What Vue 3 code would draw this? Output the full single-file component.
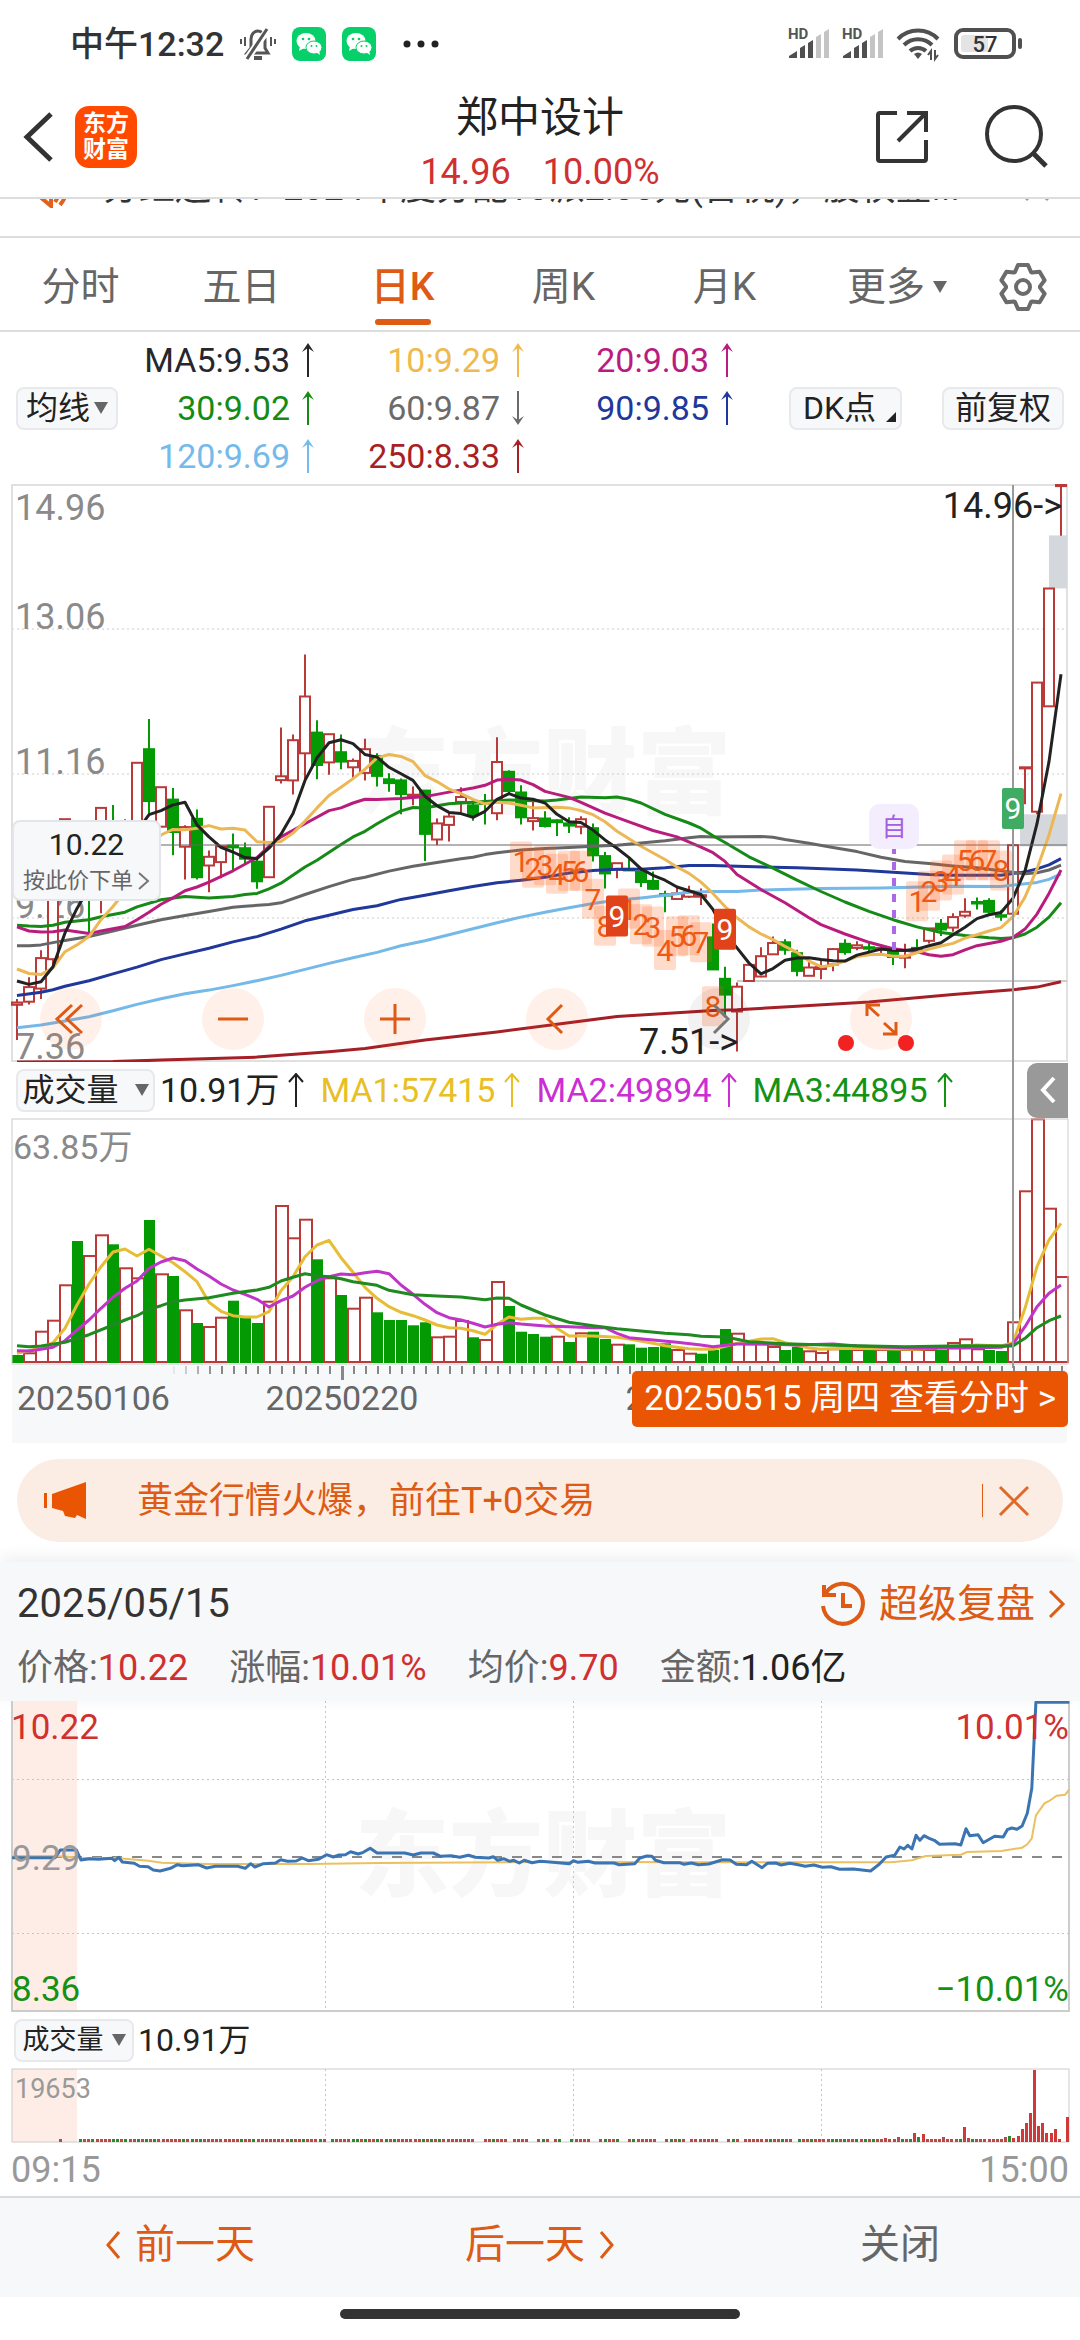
<script setup>
const tabs = ['分时', '五日', '日K', '周K', '月K']
const averages = [
  { text: 'MA5:9.53', up: true, color: '#26272b' },
  { text: '10:9.29', up: true, color: '#efb94e' },
  { text: '20:9.03', up: true, color: '#bb1a80' },
  { text: '30:9.02', up: true, color: '#148c14' },
  { text: '60:9.87', up: false, color: '#6b6b6b' },
  { text: '90:9.85', up: true, color: '#20389c' },
  { text: '120:9.69', up: true, color: '#74baea' },
  { text: '250:8.33', up: true, color: '#a81f24' },
]
const volumeAverages = [
  { text: '10.91万', color: '#222' },
  { text: 'MA1:57415', color: '#e9bf26' },
  { text: 'MA2:49894', color: '#cb2fd3' },
  { text: 'MA3:44895', color: '#149214' },
]
const stats = [
  { label: '价格:', value: '10.22', red: true },
  { label: '涨幅:', value: '10.01%', red: true },
  { label: '均价:', value: '9.70', red: true },
  { label: '金额:', value: '1.06亿', red: false },
]

const RED = '#b93a38'
const GREEN = '#049a04'

// One trading day every 12 units
const dayX = (i) => 17 + i * 12
const priceY = (v) => Math.round(((v - 10) / 2.657) * 10) / 10 + 1
const pairs = (text) => text.split(',').map((p) => p.trim().split(' ').map(Number))
const linePoints = (text, fy) => pairs(text).map(([i, v]) => `${dayX(i)},${fy(v)}`).join(' ')

// colour, high, body top, body bottom, low
const candles = `r 1376 1385 1391 1485|r 1318 1344 1383 1390|r 1246 1267 1348 1376|r 1080 1080 1270 1296|r 898 898 1010 1010
g 1000 1010 1050 1080|g 940 960 1090 1200|r 868 868 1080 1148|g 860 910 980 1000|r 898 920 1000 1040|r 748 748 960 960
g 632 712 850 890|r 813 813 918 918|g 815 846 932 994|r 914 919 971 1058|g 872 897 1052 1058|r 981 998 1021 1092
r 970 970 1012 1055|g 936 968 973 1036|g 960 975 1003 1020|g 1003 1011 1063 1083|r 865 865 1052 1052|r 654 784 794 803
r 673 688 795 832|r 460 572 723 795|g 635 668 754 792|r 672 672 747 780|g 673 720 745 765|r 737 743 760 788
r 684 712 775 795|g 723 730 783 811|g 776 792 802 825|g 790 795 831 885|r 811 833 838 861|g 820 822 937 1009
r 896 909 952 967|r 880 891 913 957|r 813 839 852 880|g 848 861 886 902|g 831 853 857 912|r 680 746 882 901
g 768 772 823 832|g 808 827 893 912|r 851 895 903 928|g 877 896 916 920|g 898 901 906 943|g 893 909 915 935
r 890 898 918 938|g 909 922 994 1010|g 985 996 1042 1082|r 1015 1015 1032 1055|g 998 1030 1034 1036|g 1033 1038 1065 1078
g 1037 1062 1083 1086|g 1088 1097 1101 1145|r 1078 1095 1110 1110|r 1075 1090 1104 1107|r 1082 1100 1104 1126
g 1175 1212 1297 1297|g 1290 1322 1364 1425|r 1332 1343 1409 1515|r 1283 1285 1328 1328|r 1238 1262 1316 1318
r 1210 1227 1257 1257|g 1217 1225 1245 1258|g 1245 1254 1301 1315|r 1275 1292 1314 1314|r 1270 1291 1296 1323
r 1240 1243 1284 1302|g 1217 1229 1251 1258|r 1222 1233 1240 1246|g 1224 1238 1242 1252|r 1233 1240 1244 1260
g 1243 1245 1264 1285|r 1229 1262 1266 1294|g 1217 1240 1244 1250|r 1188 1188 1221 1228|g 1163 1176 1191 1208
r 1148 1158 1186 1197|r 1108 1144 1154 1160|g 1106 1118 1122 1138|g 1108 1115 1144 1149|g 1140 1153 1157 1168
r 967 967 1149 1175|r 760 760 763 858|r 535 535 878 885|r 285 285 598 598|r 10 10 13 145`
  .split(/[|\n]/)
  .map((row, i) => {
    const [c, high, top, bottom, low] = row.trim().split(' ')
    return {
      x: dayX(i),
      color: c === 'r' ? RED : GREEN,
      fill: c === 'r' ? '#fff' : GREEN,
      high: priceY(+high),
      top: priceY(+top),
      bottom: priceY(+bottom),
      low: priceY(+low),
    }
  })

const priceLines = [
  { color: '#a51f26', data: '0 1543,8 1542,12 1538,20 1530,26 1516,29 1507,34 1485,40 1463,45 1443,50 1422,54 1414,58 1406,60 1404,65 1395,71 1384,78 1364,83 1351,85 1344,87 1330' },
  { color: '#74b9e8', data: '0 1452,2 1445,4 1434,6 1423,8 1407,10 1390,12 1375,14 1362,16 1352,18 1340,20 1327,22 1313,24 1297,26 1281,28 1266,30 1252,32 1234,34 1221,36 1205,38 1189,40 1173,42 1158,44 1145,46 1133,48 1122,50 1113,52 1107,54 1100,56 1092,58 1090,60 1090,62 1086,67 1082,72 1081,78 1076,82 1077,83 1073,85 1066,86 1058,87 1043' },
  { color: '#1f3899', data: '0 1366,2 1358,3 1351,4 1342,6 1327,8 1309,10 1291,12 1271,14 1256,16 1241,18 1224,20 1210,22 1190,24 1168,26 1153,28 1138,30 1128,32 1111,34 1100,36 1088,38 1077,40 1067,42 1060,44 1052,46 1041,48 1034,50 1031,52 1031,54 1027,56 1021,58 1021,60 1023,65 1027,70 1033,73 1039,76 1045,78 1047,82 1047,83 1042,84 1038,85 1030,86 1019,87 1003' },
  { color: '#666', data: '0 1234,1 1234,2 1232,4 1220,6 1210,8 1195,10 1180,12 1165,14 1154,16 1143,18 1132,19 1129,21 1125,22 1120,24 1098,26 1077,28 1058,29 1052,31 1036,33 1023,35 1013,37 1003,38 999,39 992,40 987,42 980,44 976,46 973,48 970,50 967,52 961,54 955,56 947,57 944,58 945,62 944,63 946,64 952,66 962,68 973,70 984,72 999,74 1010,76 1016,78 1022,80 1027,82 1035,84 1043,85 1040,86 1033,87 1020' },
  { color: '#168a16', data: '0 1180,1 1182,2 1183,3 1180,4 1172,6 1165,7 1157,9 1145,10 1131,12 1112,14 1103,16 1107,18 1103,19 1098,20 1095,21 1083,22 1068,24 1025,25 1007,27 965,28 945,29 930,30 910,31 892,32 876,33 867,34 868,35 862,36 857,38 853,40 849,41 847,44 850,45 847,47 839,49 841,50 839,51 845,52 855,54 885,56 908,57 922,58 942,59 960,61 998,63 1028,65 1060,67 1090,69 1118,71 1143,73 1165,75 1184,77 1199,79 1207,81 1213,82 1215,83 1213,84 1203,85 1185,86 1158,87 1120' },
  { color: '#b81d7d', data: '0 1184,1 1195,2 1198,3 1197,4 1192,5 1197,6 1202,7 1195,9 1183,10 1165,11 1145,12 1124,13 1107,14 1088,15 1078,16 1065,18 1035,20 1000,21 970,22 945,24 910,26 875,27 868,28 855,29 845,30 846,32 843,34 838,36 826,38 815,39 808,40 794,41 792,42 794,43 806,44 824,46 840,47 853,49 882,51 905,53 928,55 945,57 972,58 987,59 1010,60 1045,62 1085,64 1120,66 1160,67 1178,69 1203,71 1225,73 1242,75 1250,76 1258,77 1262,78 1258,79 1245,80 1234,82 1222,83 1212,84 1190,85 1150,86 1095,87 1033' },
  { color: '#ecb755', data: '0 1296,1 1308,2 1311,3 1293,4 1250,5 1232,6 1210,7 1165,8 1130,9 1090,11 985,12 940,13 925,14 926,15 922,16 915,17 924,18 922,19 927,20 958,21 960,22 957,23 935,24 903,25 868,26 835,27 813,28 790,29 765,30 735,31 726,32 731,33 745,34 782,35 798,36 818,37 830,38 845,39 857,40 853,41 855,42 861,43 868,45 866,46 868,47 875,48 886,49 905,50 930,51 950,52 970,54 1005,55 1025,56 1042,57 1065,58 1095,59 1130,60 1160,61 1184,62 1203,63 1218,64 1236,65 1252,66 1275,67 1290,68 1286,69 1275,70 1263,71 1258,72 1257,73 1262,74 1262,75 1253,76 1243,77 1235,78 1228,79 1214,80 1205,81 1195,82 1186,83 1157,84 1105,85 1030,86 940,87 830' },
  { color: '#222', data: '0 1328,1 1337,2 1330,3 1290,4 1200,5 1135,6 1080,8 990,10 930,11 886,12 875,13 860,14 853,15 913,16 945,17 973,18 985,19 1000,20 1003,21 975,22 938,23 883,24 795,25 735,26 695,27 687,28 697,29 726,30 733,31 760,32 777,33 795,34 837,35 862,36 880,37 883,38 893,39 877,40 845,41 830,42 842,43 845,44 855,45 885,46 905,47 907,48 927,49 953,50 975,51 1000,52 1030,53 1047,54 1060,55 1078,56 1088,57 1098,58 1138,59 1200,60 1240,61 1280,62 1309,63 1295,64 1273,65 1267,66 1266,67 1271,68 1274,69 1275,70 1259,71 1251,72 1243,73 1246,74 1247,75 1243,76 1234,77 1226,78 1205,79 1185,80 1162,81 1152,82 1146,83 1108,84 1035,85 910,86 745,87 513' },
].map((l) => ({ color: l.color, points: linePoints(l.data, priceY) }))

// Nine-turn sequence marks: day index, digit, top edge
const marks = pairs(
  '42 1 957,43 2 974,44 3 967,45 4 990,46 5 982,47 6 982,48 7 1056,49 8 1128,51 1 1082,52 2 1124,53 3 1130,54 4 1192,55 5 1156,56 6 1153,57 7 1172,58 8 1342,75 1 1063,76 2 1035,77 3 1008,78 4 992,79 5 954,80 6 954,81 7 954,82 8 981',
).map(([i, n, v]) => ({ x: dayX(i), n, y: priceY(v) }))
const nines = [
  { x: dayX(50), y: priceY(1101), color: '#e0431a' },
  { x: dayX(59), y: priceY(1136), color: '#e0431a' },
  { x: dayX(83), y: priceY(815), color: '#40ab63' },
]
const priceLabels = [
  { text: '14.96', v: 103 },
  { text: '13.06', v: 393 },
  { text: '11.16', v: 779 },
  { text: '9.26', v: 1160 },
  { text: '7.36', v: 1535 },
]

// Daily volume
const volY = (v) => Math.round((v / 3 - 58) * 10) / 10
const volumes = 'g885 r880 r815 r782 r676 g543 r588 r526 g553 r625 r655 g480 r643 g648 r751 g789 r801 r773 g722 g773 g789 r725 r438 r535 r479 g598 r655 g705 r746 r713 g757 g780 g780 g796 g787 r832 r830 r783 g832 r840 r666 g738 g815 g822 g830 r830 g846 r820 g815 g837 r854 g853 g863 g861 g850 r870 r881 g881 g870 g807 r821 r853 r853 r861 g870 g860 r874 r879 r868 g868 r870 g870 r870 g870 r870 r870 r870 g870 r849 r838 r868 g870 g873 r787 r394 r178 r446 r651'
  .split(' ')
  .map((t, i) => ({ x: dayX(i), red: t[0] === 'r', y: volY(+t.slice(1)) }))
const volumeLines = [
  { color: '#e6bd35', data: '0 880,1 872,2 863,3 848,4 805,5 735,6 672,7 620,8 576,9 567,10 588,11 568,12 588,13 608,14 635,15 665,16 727,17 754,18 767,19 771,20 771,21 755,22 692,23 650,24 590,25 555,26 541,27 593,28 637,29 682,30 715,31 740,32 757,33 767,34 780,35 795,36 803,37 805,38 812,39 823,40 793,41 771,42 778,43 775,44 775,45 805,46 828,48 828,50 832,51 837,53 850,54 857,56 866,57 868,58 868,60 850,61 844,62 837,63 836,64 848,66 864,67 868,69 865,75 868,78 860,80 855,82 858,83 848,84 745,85 620,86 540,87 490' },
  { color: '#bf35c8', data: '0 872,1 873,2 868,3 862,4 842,5 810,6 780,7 745,8 712,9 685,10 663,11 625,12 606,13 594,14 602,15 627,16 648,17 672,18 690,19 703,20 718,21 741,22 722,23 708,24 682,25 662,26 650,27 642,28 644,29 638,30 634,31 641,32 675,33 703,34 733,35 758,36 773,37 780,38 790,39 801,40 793,41 788,42 792,43 795,44 798,46 800,48 803,49 803,50 820,51 833,53 840,55 847,57 855,58 860,60 852,62 852,65 855,68 852,70 858,75 865,79 864,82 862,83 852,84 800,85 740,86 700,87 675' },
  { color: '#1f8a1f', data: '0 857,1 860,2 858,4 847,6 824,8 795,9 780,10 767,11 748,12 737,13 725,14 720,16 713,18 700,20 690,21 682,22 663,23 652,24 641,25 647,26 650,27 656,28 665,30 676,31 691,33 704,35 708,37 711,39 719,40 714,41 715,42 735,43 750,44 765,46 787,48 797,50 806,52 813,54 820,56 824,57 829,59 831,60 838,61 845,64 851,68 856,74 860,79 857,83 858,84 835,85 803,86 782,87 768' },
].map((l) => ({ color: l.color, points: linePoints(l.data, volY) }))
const ticks = Array.from({ length: 75 }, (_, k) => ({
  x: 174 + k * 12,
  major: k === 14 || k === 44,
  opacity: Math.min(1, 0.15 + k * 0.25),
}))

// Intraday curve: session position and level
const minutePoints = (text) =>
  pairs(text).map(([x, v]) => `${Math.round((x / 2.9037) * 10) / 10},${Math.round(((v - 33) / 3) * 10) / 10}`).join(' ')
const avgCurve = minutePoints('35 498,160 498,235 503,345 505,430 512,470 518,600 522,900 522,1100 519,1568 516,2468 517,2588 517,2648 511,2688 498,2790 494,2808 486,2908 483,2968 473,2983 463,2996 445,3008 376,3033 340,3048 332,3068 317,3093 314,3105 298')
const priceCurve = minutePoints('35 503,160 503,175 480,222 480,235 510,260 506,285 508,325 505,333 512,345 502,355 516,390 520,405 529,430 530,445 540,465 543,495 535,515 524,530 527,575 524,600 534,625 529,690 529,712 535,728 521,740 531,765 521,800 519,815 509,835 514,860 513,878 504,895 512,925 508,948 494,968 501,985 495,1003 494,1018 485,1040 492,1055 487,1075 475,1095 489,1175 489,1200 495,1222 489,1258 489,1280 499,1310 497,1335 502,1360 496,1380 502,1420 504,1432 500,1445 511,1462 506,1480 514,1492 511,1508 519,1522 511,1545 518,1568 514,1588 515,1653 521,1665 512,1678 517,1708 514,1728 519,1783 519,1798 524,1843 521,1858 504,1878 498,1893 499,1903 511,1928 518,1973 518,1986 523,2008 519,2028 524,2058 522,2098 509,2120 510,2138 523,2168 524,2183 514,2213 533,2228 520,2253 519,2268 525,2293 520,2318 524,2338 529,2363 525,2388 532,2413 530,2438 538,2478 537,2528 543,2553 523,2573 501,2598 496,2613 471,2625 477,2636 466,2648 477,2660 436,2671 451,2683 437,2698 445,2713 451,2728 463,2773 461,2790 465,2805 416,2816 437,2840 434,2855 458,2888 439,2913 441,2925 419,2938 414,2953 418,2968 408,2983 370,2996 295,3008 37,3105 37')

const spikes = { 195: 4, 198: 5, 202: 9, 203: 5, 204: 8, 209: 5, 214: 15, 215: 4, 224: 5, 225: 6, 226: 4, 227: 6, 228: 13, 229: 19, 230: 29, 231: 72, 232: 16, 233: 19, 234: 9, 235: 9, 236: 13, 237: 3, 239: 25 }
const gaps = [60, 96, 97, 104, 109, 110, 114, 117, 118, 124, 125, 131, 132, 140, 141, 147, 155, 156, 160, 173, 238]
const palette = 'grrgrrrrggrgrrgrgrgrrrrrrgrgrgrrrrrrrrrgrrgrrrrrrrrgrrgrrr'
const minuteBars = Array.from({ length: 240 }, (_, k) => {
  const late = k > 225 || spikes[k] > 6
  const green = !late && palette[k % palette.length] === 'g'
  return { k, x: Math.round(79 + k * 4.13), h: spikes[k] || 3, color: green ? '#2c8a2c' : late ? '#cf3a38' : '#b94a48' }
}).filter((b) => !gaps.includes(b.k))

const gear = (() => {
  const tooth = [[-8, -15], [-5, -22], [5, -22], [8, -15]]
  const pts = []
  for (let k = 0; k < 6; k++) {
    const a = (k * Math.PI) / 3
    for (const [x, y] of tooth) {
      pts.push(`${(24 + x * Math.cos(a) - y * Math.sin(a)).toFixed(1)},${(24 + x * Math.sin(a) + y * Math.cos(a)).toFixed(1)}`)
    }
  }
  return pts.join(' ')
})()
</script>

<template>
  <div class="page">
    <div class="status">
      <span class="clock">中午12:32</span>
      <svg width="36" height="36" viewBox="0 0 36 36" fill="none" stroke="#555" stroke-width="3">
        <path d="M7 27h21l-3-5V13a7 8 0 0 0-14 0v9z" />
        <path d="M14 32h8" stroke-width="4" />
        <path d="M29 2L6 34" stroke="#fff" stroke-width="7" />
        <path d="M27 3L7 33" />
        <path d="M5 11v9M31 11v9M1 13v5M35 13v5" stroke-width="2" />
      </svg>
      <svg v-for="n in 2" :key="n" class="chat" width="34" height="34" viewBox="0 0 34 34">
        <rect width="34" height="34" rx="8" fill="#07d06a" />
        <ellipse cx="14" cy="14" rx="9.500" ry="8" fill="#fff" />
        <path d="M8 19l-1 5 5-3z" fill="#fff" />
        <ellipse cx="22" cy="20.500" rx="8" ry="6.500" fill="#fff" stroke="#07d06a" />
        <path d="M24 25l4 3-1-5z" fill="#fff" />
        <g fill="#07d06a"><circle cx="11" cy="12" r="1.300" /><circle cx="17" cy="12" r="1.300" /><circle cx="19.500" cy="19" r="1" /><circle cx="24.500" cy="19" r="1" /></g>
      </svg>
      <svg class="dots" width="36" height="8" viewBox="0 0 36 8" fill="#222"><circle cx="4" cy="4" r="3.500" /><circle cx="18" cy="4" r="3.500" /><circle cx="32" cy="4" r="3.500" /></svg>
      <span class="grow"></span>
      <svg v-for="n in 2" :key="'s' + n" class="signal" width="42" height="34" viewBox="0 0 42 34">
        <text x="0" y="12" font-size="15" font-weight="700" fill="#555">HD</text>
        <path d="M1 31v-2l8-5v7zM12 31V21l5-3v13zM20 31V16l5-3v18z" fill="#505050" />
        <path d="M28 31V10l5-3v24zM36 31V5l5-3v29z" fill="#c4c4c4" />
      </svg>
      <svg class="wifi" width="44" height="36" viewBox="0 0 44 36" fill="none" stroke="#505050" stroke-width="4">
        <path d="M2 13a28 28 0 0 1 40 0" /><path d="M8 19a20 20 0 0 1 28 0" /><path d="M14 25a12 12 0 0 1 16 0" />
        <path d="M18 28q4-3 8 0l-4 5z" fill="#505050" stroke="none" />
        <path d="M35 34v-9l-3 4M39 24v9l3-4" stroke-width="2" />
      </svg>
      <svg width="70" height="32" viewBox="0 0 70 32">
        <rect x="2" y="2" width="58" height="27" rx="7" fill="#fff" stroke="#505050" stroke-width="4" />
        <rect x="7" y="7" width="27" height="17" rx="3" fill="#e4e4e4" />
        <rect x="64" y="10" width="4" height="11" rx="2" fill="#505050" />
        <text x="31" y="24" text-anchor="middle" font-size="22" font-weight="500" fill="#333">57</text>
      </svg>
    </div>

    <header class="header">
      <div class="side">
        <button class="icon" aria-label="返回">
          <svg width="32" height="52" viewBox="0 0 32 52" fill="none" stroke="#333" stroke-width="5"><path d="M28 3L4 26l24 23" /></svg>
        </button>
        <a href="#" class="logo"><span>东方</span><span>财富</span></a>
      </div>
      <div class="title">
        <h1>郑中设计</h1>
        <p><span>14.96</span><span>10.00%</span></p>
      </div>
      <div class="side right">
        <button class="icon" aria-label="分享">
          <svg width="54" height="54" viewBox="0 0 54 54" fill="none" stroke="#333" stroke-width="4">
            <path d="M22 3H5q-2 0-2 2v44q0 2 2 2h44q2 0 2-2V30" /><path d="M32 3h19v19M50 4L23 31" />
          </svg>
        </button>
        <button class="icon" aria-label="搜索">
          <svg width="64" height="64" viewBox="0 0 64 64" fill="none" stroke="#333" stroke-width="4"><circle cx="29" cy="29" r="27" /><path d="M48 48l13 13" stroke-width="5" /></svg>
        </button>
      </div>
    </header>

    <div class="notice">
      <svg width="44" height="36" viewBox="0 0 44 36" fill="none" stroke="#e0621c" stroke-width="4"><path d="M2 24V12h8L24 2v32L12 24zM30 10q6 8-2 20M37 4q8 14-4 29" /></svg>
      <span>分红送转：2024年度分配10派2.00元(含税)，股权登...</span>
      <svg class="dismiss" width="26" height="26" viewBox="0 0 26 26" fill="none" stroke="#999" stroke-width="3"><path d="M2 2l22 22M24 2L2 24" /></svg>
    </div>

    <nav class="tabs">
      <a v-for="t in tabs" :key="t" href="#" :class="{ active: t === '日K' }">{{ t }}</a>
      <a href="#" class="more">更多<i class="caret"></i></a>
      <button class="icon gear" aria-label="设置">
        <svg width="48" height="48" viewBox="0 0 48 48" fill="none" stroke="#6b6b6b" stroke-width="4" stroke-linejoin="round"><polygon :points="gear" /><circle cx="24" cy="24" r="7" /></svg>
      </button>
    </nav>

    <section class="legend">
      <button class="chip">均线<i class="caret"></i></button>
      <div class="averages">
        <span v-for="a in averages" :key="a.text" :style="{ color: a.color }">{{ a.text }}
          <svg width="12" height="34" viewBox="0 0 12 34" :class="{ down: !a.up }"><path d="M6 2v32" stroke="currentColor" stroke-width="2" /><path d="M6 0l6 9-6-4-6 4z" fill="currentColor" /></svg>
        </span>
      </div>
      <button class="chip dk">DK点<i class="corner"></i></button>
      <button class="chip adjust">前复权</button>
    </section>

    <section class="chart">
      <svg class="plot" viewBox="0 0 1080 578">
        <text class="watermark" x="355" y="323">东方财富</text>
        <g stroke="#ccc" stroke-dasharray="2 3"><path d="M12 145H1067M12 290H1067M12 434H1067" /></g>
        <rect x="12" y="1" width="1055" height="576" fill="none" stroke="#e0e0e0" stroke-width="2" />
        <g font-size="36" fill="#8a8a8a"><text v-for="l in priceLabels" :key="l.text" x="15" :y="priceY(l.v)">{{ l.text }}</text></g>
        <rect x="1049" :y="priceY(144)" width="18" height="53" fill="#d4d7dc" />
        <rect x="1020" :y="priceY(885)" width="47" height="32" fill="#d4d7dc" />
        <path d="M737 497H1067" stroke="#ccc" stroke-width="2" />
        <g v-for="c in candles" :key="c.x" :stroke="c.color" stroke-width="2">
          <path :d="`M${c.x} ${c.high}V${c.low}`" />
          <rect :x="c.x - 5" :y="c.top" width="10" :height="Math.max(1, c.bottom - c.top)" :fill="c.fill" />
        </g>
        <g fill="none" stroke-width="3" stroke-linejoin="round"><polyline v-for="l in priceLines" :key="l.color" :points="l.points" :stroke="l.color" /></g>
        <path d="M12 361H1067" stroke="#666" />
        <path d="M1013 1V578" stroke="#999" stroke-width="2" />
        <g font-size="30" text-anchor="middle">
          <g v-for="m in marks" :key="m.x">
            <rect :x="m.x - 11" :y="m.y" width="22" height="40" rx="2" fill="#ff5a14" fill-opacity=".22" />
            <text :x="m.x" :y="m.y + 31" fill="#ee5a14">{{ m.n }}</text>
          </g>
          <g v-for="m in nines" :key="m.x">
            <rect :x="m.x - 11" :y="m.y" width="22" height="41" rx="2" :fill="m.color" />
            <text :x="m.x" :y="m.y + 31" fill="#fff">9</text>
          </g>
        </g>
        <path d="M894 466V364" stroke="#ad68e8" stroke-width="4" stroke-dasharray="8 8" />
        <rect x="869" y="320" width="50" height="45" rx="10" fill="#f4edfd" />
        <text x="894" y="352" text-anchor="middle" font-size="25" fill="#a45fe0">自</text>
        <g font-size="36" fill="#222"><text x="1062" y="34" text-anchor="end">14.96-&gt;</text><text x="738" y="570" text-anchor="end">7.51-&gt;</text></g>
      </svg>
      <button class="order"><b>10.22</b><span>按此价下单<svg width="12" height="18" viewBox="0 0 12 18" fill="none" stroke="#777" stroke-width="2"><path d="M1 1l9 8-9 8" /></svg></span></button>
      <div class="tools">
        <button aria-label="最早"><svg viewBox="0 0 62 62"><path d="M32 17L17 31l15 14M42 17L27 31l15 14" /></svg></button>
        <button aria-label="缩小"><svg viewBox="0 0 62 62"><path d="M16 31h30" /></svg></button>
        <button aria-label="放大"><svg viewBox="0 0 62 62"><path d="M16 31h30M31 16v30" /></svg></button>
        <button aria-label="向左"><svg viewBox="0 0 62 62"><path d="M36 17L22 31l14 14" /></svg></button>
        <button aria-label="向右" class="muted"><svg viewBox="0 0 62 62"><path d="M26 17l14 14-14 14" /></svg></button>
        <button aria-label="全屏" class="full"><svg viewBox="0 0 62 62"><path d="M17 28V17h13M18 18l11 10M46 34v12H33M45 45L34 35" /></svg></button>
      </div>
    </section>

    <section class="indicator">
      <button class="chip vol">成交量<i class="caret"></i></button>
      <span v-for="a in volumeAverages" :key="a.text" :style="{ color: a.color }">{{ a.text }}
        <svg width="16" height="34" viewBox="0 0 16 34" fill="none" stroke="currentColor" stroke-width="2"><path d="M8 1v33M1 9l7-8 7 8" /></svg>
      </span>
      <i class="cross"></i>
      <button class="collapse" aria-label="展开"><svg width="16" height="28" viewBox="0 0 16 28" fill="none" stroke="#fff" stroke-width="4"><path d="M14 2L3 14l11 12" /></svg></button>
    </section>

    <section class="chart">
      <svg class="plot" viewBox="0 0 1080 325">
        <rect x="12" y="246" width="1055" height="79" fill="#f7f8fa" />
        <text x="13" y="41" font-size="34" fill="#8a8a8a">63.85万</text>
        <g v-for="v in volumes" :key="v.x">
          <rect v-if="v.red" :x="v.x - 5" :y="v.y" width="12" :height="244 - v.y" fill="#fff" :stroke="RED" stroke-width="2" />
          <rect v-else :x="v.x - 5" :y="v.y" width="11" :height="245 - v.y" :fill="GREEN" />
        </g>
        <g fill="none" stroke-width="3" stroke-linejoin="round"><polyline v-for="l in volumeLines" :key="l.color" :points="l.points" :stroke="l.color" /></g>
        <rect x="12" y="1" width="1056" height="245" fill="none" stroke="#ccc" />
        <path d="M1013 0V250" stroke="#999" stroke-width="2" />
        <rect v-for="t in ticks" :key="t.x" :x="t.x - 1" y="248" :width="t.major ? 3 : 2" :height="t.major ? 14 : 8" fill="#888" :opacity="t.opacity" />
        <g font-size="34" fill="#666"><text x="17" y="292">20250106</text><text x="342" y="292" text-anchor="middle">20250220</text><text x="702" y="292" text-anchor="middle">20250407</text></g>
      </svg>
      <a href="#" class="daytag">20250515 周四 查看分时 &gt;</a>
    </section>

    <aside class="banner">
      <svg width="42" height="38" viewBox="0 0 42 38" fill="#ea5504"><rect y="11" width="3" height="15" /><path d="M8 12L42 0v37l-9-4-2 3-10-2-2-5-11-3z" /></svg>
      <a href="#">黄金行情火爆，前往T+0交易</a>
      <i></i>
      <button class="icon" aria-label="关闭横幅"><svg width="32" height="32" viewBox="0 0 32 32" fill="none" stroke="#e0692a" stroke-width="3"><path d="M2 2l28 28M30 2L2 30" /></svg></button>
    </aside>

    <section class="review">
      <div class="reviewhead">
        <time>2025/05/15</time>
        <a href="#">
          <svg width="46" height="46" viewBox="0 0 46 46" fill="none" stroke="#dd5b14" stroke-width="4"><path d="M6 12A20 20 0 1 1 3 25" /><path d="M4 4v10h12" /><path d="M23 12v13h9" /></svg>
          超级复盘
          <svg width="18" height="28" viewBox="0 0 18 28" fill="none" stroke="#dd5b14" stroke-width="3"><path d="M2 1l13 13L2 27" /></svg>
        </a>
      </div>
      <div class="stats"><span v-for="s in stats" :key="s.label">{{ s.label }}<b :class="{ red: s.red }">{{ s.value }}</b></span></div>
    </section>

    <svg class="plot" viewBox="0 0 1080 311">
      <rect x="12" y="0" width="65" height="310" fill="#fdede6" />
      <text class="watermark" x="355" y="188">东方财富</text>
      <path d="M12 78.500H1069M12 232.500H1069M325.500 0V310M573.500 0V310M821.500 0V310" stroke="#c4c4c4" stroke-dasharray="2 3" />
      <path d="M12 0V310H1069V0" fill="none" stroke="#ccc" stroke-width="2" />
      <path d="M12 156H1064" stroke="#888" stroke-width="2" stroke-dasharray="10 10" />
      <polyline :points="avgCurve" fill="none" stroke="#ecc060" stroke-width="2" />
      <polyline :points="priceCurve" fill="none" stroke="#3b74b3" stroke-width="3" stroke-linejoin="round" />
      <g font-size="35">
        <text x="11" y="38" fill="#d0302f">10.22</text><text x="12" y="169" fill="#999">9.29</text><text x="12" y="300" fill="#149014">8.36</text>
        <g text-anchor="end"><text x="1069" y="38" fill="#d0302f">10.01%</text><text x="1069" y="300" fill="#149014">−10.01%</text></g>
      </g>
    </svg>
    <div class="minute">
      <button class="chip small">成交量<i class="caret"></i></button>
      <span>10.91万</span>
    </div>
    <svg class="plot" viewBox="0 0 1080 76">
      <rect x="12" y="1" width="65" height="73" fill="#fdede6" />
      <path d="M325.500 1V74M573.500 1V74M821.500 1V74" stroke="#c4c4c4" stroke-dasharray="2 3" />
      <rect x="12" y="1" width="1057" height="73" fill="none" stroke="#ccc" />
      <text x="15" y="30" font-size="27" fill="#999">19653</text>
      <rect x="59" y="71" width="3" height="3" fill="#b94a48" />
      <rect v-for="b in minuteBars" :key="b.k" :x="b.x" :y="74 - b.h" width="3" :height="b.h" :fill="b.color" />
    </svg>
    <div class="times"><span>09:15</span><span>15:00</span></div>

    <footer class="footer">
      <button><svg width="16" height="30" viewBox="0 0 16 30" fill="none" stroke="#dd5b14" stroke-width="3"><path d="M14 2L3 15l11 13" /></svg>前一天</button>
      <button>后一天<svg width="16" height="30" viewBox="0 0 16 30" fill="none" stroke="#dd5b14" stroke-width="3"><path d="M2 2l11 13L2 28" /></svg></button>
      <button class="close">关闭</button>
    </footer>
    <div class="home"><i></i></div>
  </div>
</template>

<style>
body { background: #fff; }
</style>

<style scoped>
.page { font-family: Roboto, "Noto Sans CJK SC", sans-serif; color: #222; background: #fff; overflow: hidden; }
.page * { box-sizing: border-box; }
button { font: inherit; color: inherit; background: none; border: 0; padding: 0; margin: 0; }
a { color: inherit; text-decoration: none; }
svg { display: block; flex: none; }
.plot { width: 100%; height: auto; }
.watermark { font-size: 94px; font-weight: 900; fill: #f7f7f7; }
.grow { flex: 1; }
.icon { display: flex; }
.caret { width: 0; height: 0; border: 7px solid transparent; border-top: 12px solid #666; border-bottom: 0; }

.status { display: flex; align-items: center; height: 88px; padding: 0 56px 0 70px; }
.clock { font-size: 34px; font-weight: 500; line-height: 40px; color: #333; margin-right: 16px; }
.chat { margin-left: 16px; }
.dots { margin-left: 27px; }
.signal { margin-right: 12px; }
.wifi { margin-right: 14px; }

.header { display: grid; grid-template-columns: 1fr auto 1fr; height: 111px; padding: 0 23px; border-bottom: 2px solid #ddd; }
.side { display: flex; align-items: center; gap: 20px; padding-bottom: 11px; }
.right { justify-content: flex-end; gap: 56px; padding-right: 8px; }
.logo { display: flex; flex-direction: column; align-items: center; justify-content: center; width: 62px; height: 62px; border-radius: 14px; background: #ff4a00; color: #fff; font-size: 23px; line-height: 26px; font-weight: 700; }
.title { text-align: center; }
h1 { margin: 0; font-size: 42px; line-height: 60px; font-weight: 400; }
.title p { display: flex; justify-content: center; gap: 32px; margin: 0; font-size: 36px; line-height: 48px; color: #d0302f; }

.notice { display: flex; align-items: flex-end; height: 39px; padding: 0 30px 28px 27px; border-bottom: 2px solid #ddd; overflow: hidden; font-size: 36px; line-height: 40px; color: #333; }
.notice span { flex: 1; margin-left: 32px; white-space: nowrap; }
.dismiss { margin-bottom: 6px; }

.tabs { display: flex; align-items: center; height: 94px; padding-top: 6px; border-bottom: 2px solid #ddd; font-size: 39px; line-height: 86px; color: #666; }
.tabs a { flex: 161; text-align: center; }
.tabs .active { position: relative; color: #dd5b14; font-weight: 500; }
.active::after { content: ""; position: absolute; left: 50%; bottom: 5px; width: 56px; margin-left: -28px; height: 6px; border-radius: 3px; background: #dd5b14; }
.tabs .more { flex: 184; display: flex; align-items: center; justify-content: center; gap: 8px; }
.gear { width: 91px; padding-left: 10px; }

.legend { display: flex; align-items: center; height: 152px; padding: 0 16px; }
.chip { display: flex; align-items: center; justify-content: center; gap: 4px; height: 43px; padding: 0 8px; border: 2px solid #e8e9ec; border-radius: 8px; background: #f7f8fa; font-size: 32px; line-height: 38px; white-space: nowrap; }
.dk { margin-right: 40px; padding-left: 12px; padding-right: 4px; gap: 10px; }
.adjust { padding: 0 11px; }
.corner { align-self: flex-end; margin-bottom: 6px; border: 5px solid transparent; border-right-color: #222; border-bottom-color: #222; }
.averages { flex: 1; display: grid; grid-template-columns: 196px 210px 209px; font-size: 34px; line-height: 48px; }
.averages span { display: flex; justify-content: flex-end; align-items: center; gap: 12px; }
.down { transform: rotate(180deg); }

.chart { position: relative; }
.order { position: absolute; left: 12px; top: 336px; width: 149px; height: 81px; border: 2px solid #e3e5ea; border-radius: 8px; background: #f7f8fa; }
.order b { display: block; font-size: 30px; line-height: 40px; font-weight: 400; }
.order span { display: flex; align-items: center; justify-content: center; gap: 5px; font-size: 22px; line-height: 32px; color: #666; }
.tools { position: absolute; left: 40px; bottom: 12px; display: flex; gap: 100px; }
.tools button { position: relative; width: 62px; height: 62px; border-radius: 50%; background: rgba(255, 90, 20, .09); }
.tools svg { fill: none; stroke: #dd5b14; stroke-width: 3; }
.tools .muted { background: rgba(0, 0, 0, .05); }
.muted svg { stroke: #777; }
.full::before, .full::after { content: ""; position: absolute; left: -12px; bottom: -1px; width: 16px; height: 16px; border-radius: 50%; background: #f22222; }
.full::after { left: 48px; }

.indicator { position: relative; display: flex; align-items: center; height: 56px; padding: 0 12px 0 16px; font-size: 34px; line-height: 44px; }
.indicator span { display: flex; align-items: center; gap: 9px; margin-right: 16px; }
.vol { width: 139px; margin-right: 5px; gap: 16px; }
.cross { position: absolute; left: 93.700%; top: 0; bottom: 0; width: 2px; background: #999; }
.collapse { display: flex; align-items: center; justify-content: center; width: 41px; height: 55px; margin-left: auto; border-radius: 10px 0 0 10px; background: #999; }
.daytag { position: absolute; right: 12px; top: 253px; padding: 0 12px; border-radius: 5px; background: #ea5504; color: #fff; font-size: 35px; line-height: 56px; white-space: nowrap; }

.banner { display: flex; align-items: center; height: 83px; margin: 16px 17px 20px; padding: 0 33px 0 27px; border-radius: 42px; background: #fcede4; color: #dd5b14; font-size: 36px; line-height: 44px; }
.banner a { flex: 1; margin-left: 51px; }
.banner i { width: 1px; height: 33px; margin-right: 15px; background: #dd5b14; }

.review { height: 139px; padding: 12px 14px 0 17px; background: #f7f8fa; box-shadow: 0 -4px 16px rgba(0, 0, 0, .07); }
.reviewhead { display: flex; justify-content: space-between; align-items: center; height: 60px; font-size: 40px; line-height: 56px; color: #333; }
.reviewhead a { display: flex; align-items: center; gap: 13px; font-size: 39px; color: #dd5b14; }
.stats { display: flex; gap: 41px; font-size: 36px; line-height: 68px; color: #666; }
.stats b { font-weight: 400; color: #222; }
.stats .red { color: #d0302f; }

.minute { display: flex; align-items: center; gap: 4px; height: 56px; padding-left: 14px; font-size: 32px; line-height: 38px; }
.small { width: 120px; font-size: 27px; gap: 8px; }
.times { display: flex; justify-content: space-between; height: 52px; padding: 0 11px; font-size: 36px; line-height: 52px; color: #999; }

.footer { display: flex; height: 101px; padding-bottom: 5px; border-top: 2px solid #d8dbe0; background: #f7f8fa; font-size: 40px; line-height: 60px; color: #dd5b14; }
.footer button { flex: 1; display: flex; align-items: center; justify-content: center; gap: 14px; }
.footer .close { color: #666; }
.home { display: flex; justify-content: center; padding: 12px 0 21px; }
.home i { width: 37%; height: 10px; border-radius: 5px; background: #333; }
</style>
